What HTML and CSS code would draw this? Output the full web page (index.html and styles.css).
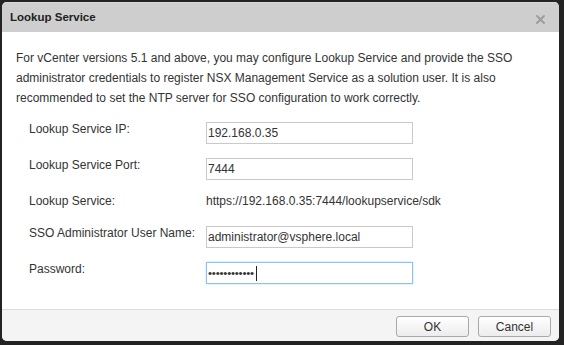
FILE: index.html
```html
<!DOCTYPE html>
<html>
<head>
<meta charset="utf-8">
<link rel="stylesheet" href="styles.css">
</head>
<body>
<div class="dialog">
  <div class="header">
    <span class="title">Lookup Service</span>
    <svg class="close" width="9" height="9" viewBox="0 0 9 9"><path d="M1 1L8 8M8 1L1 8" stroke="#9a9a9a" stroke-width="1.8" stroke-linecap="round"/></svg>
  </div>
  <div class="content">
    <p class="intro">For vCenter versions 5.1 and above, you may configure Lookup Service and provide the SSO administrator credentials to register NSX Management Service as a solution user. It is also recommended to set the NTP server for SSO configuration to work correctly.</p>
    <div class="form">
      <label class="label">Lookup Service IP:</label>
      <input class="field" type="text" value="192.168.0.35">
      <label class="label">Lookup Service Port:</label>
      <input class="field" type="text" value="7444">
      <span class="label">Lookup Service:</span>
      <span class="value">https://192.168.0.35:7444/lookupservice/sdk</span>
      <label class="label">SSO Administrator User Name:</label>
      <input class="field" type="text" value="administrator@vsphere.local">
      <label class="label">Password:</label>
      <div class="field focused"><span class="dots">••••••••••••</span><span class="caret"></span></div>
    </div>
  </div>
  <div class="footer">
    <button class="btn">OK</button>
    <button class="btn">Cancel</button>
  </div>
</div>
</body>
</html>
```

FILE: styles.css
```css
html, body {
  margin: 0;
  padding: 0;
  background: #232323;
  width: 564px;
  height: 345px;
  overflow: hidden;
}
body {
  padding: 2px 0 0 2px;
  box-sizing: border-box;
  font-family: "Liberation Sans", Arial, sans-serif;
  font-size: 12px;
  color: #333;
}
.dialog {
  width: 557px;
  height: 339px;
  background: #fff;
  border-radius: 5px;
  overflow: hidden;
  display: flex;
  flex-direction: column;
}
.header {
  height: 29px;
  background: #cecece;
  border-top: 1px solid #dadada;
  display: flex;
  align-items: center;
  justify-content: space-between;
  padding: 0 14px 0 8px;
  flex: none;
}
.title {
  font-weight: bold;
  font-size: 11.5px;
  color: #222;
  padding-bottom: 1px;
}
.close {
  margin-top: 3px;
}
.content {
  flex: 1;
  padding: 16px 14px 0 14px;
}
.intro {
  margin: 0;
  line-height: 20px;
}
.form {
  display: grid;
  grid-template-columns: 177px 207px;
  row-gap: 14px;
  align-items: start;
  margin: 14px 0 0 13px;
}
.label, .value {
  line-height: 14px;
}
.value {
  height: 18px;
}
.field {
  box-sizing: border-box;
  width: 207px;
  height: 22px;
  margin: 0;
  border: 1px solid #c9c9c9;
  padding: 0 2px 0 1px;
  font-family: "Liberation Sans", Arial, sans-serif;
  font-size: 12px;
  color: #333;
  background: #fff;
  outline: none;
}
.focused {
  border-color: #8ec2ec;
  box-shadow: 0 0 2px #b8dcf6;
  display: flex;
  align-items: center;
}
.dots {
  font-size: 11.5px;
  letter-spacing: -0.2px;
  color: #333;
  line-height: 14px;
}
.caret {
  width: 1px;
  height: 15px;
  background: #222;
  margin-left: 2px;
}
.footer {
  flex: none;
  height: 32px;
  border-top: 1px solid #dcdcdc;
  background: #f4f4f4;
  display: flex;
  justify-content: flex-end;
  align-items: flex-start;
  gap: 9px;
  padding: 6px 8px 0 0;
  box-sizing: border-box;
}
.btn {
  width: 73px;
  height: 21px;
  border: 1px solid #a9a9a9;
  border-radius: 3px;
  background: linear-gradient(#ffffff, #ececec);
  font-family: "Liberation Sans", Arial, sans-serif;
  font-size: 12px;
  color: #333;
  padding: 0;
}
```
